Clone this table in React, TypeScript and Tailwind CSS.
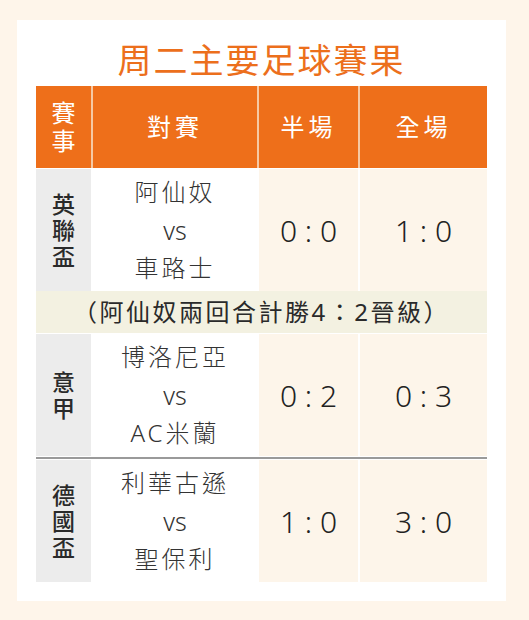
const rows = [
  { league: ['英', '聯', '盃'], home: '阿仙奴', away: '車路士', half: '0 : 0', full: '1 : 0' },
  { league: ['意', '甲'], home: '博洛尼亞', away: 'AC米蘭', half: '0 : 2', full: '0 : 3' },
  { league: ['德', '國', '盃'], home: '利華古遜', away: '聖保利', half: '1 : 0', full: '3 : 0' },
];

const cols = 'grid grid-cols-[55px_164px_99px_127px] gap-x-[2px]';

export default function App() {
  return (
    <div className="w-[529px] h-[620px] bg-[#fef5ea] pt-[20px] pl-[17px] pr-[23px] font-['Noto_Sans','Noto_Sans_CJK_TC',sans-serif]">
      <div className="h-[581px] bg-white pt-[19px] px-[19px]">
        <h1 className="h-[42px] mb-[5px] text-center text-[34px] leading-[42px] tracking-[2px] text-[#ec6f1c] font-normal">
          周二主要足球賽果
        </h1>
        <div className="bg-white">
          {/* header */}
          <div className={`${cols} h-[82px] bg-[#f6c9a4] text-white text-[24px]`}>
            <div className="bg-[#ee6f1a] flex flex-col items-center justify-center leading-[28px]">
              <span>賽</span>
              <span>事</span>
            </div>
            <div className="bg-[#ee6f1a] flex items-center justify-center tracking-[4px]">對賽</div>
            <div className="bg-[#ee6f1a] flex items-center justify-center tracking-[4px]">半場</div>
            <div className="bg-[#ee6f1a] flex items-center justify-center tracking-[4px]">全場</div>
          </div>

          {rows.map((r, i) => (
            <div key={i}>
              <div className={`${cols} mt-px h-[122px] text-[#333]`}>
                <div className="bg-[#ececec] flex flex-col items-center justify-center text-[23px] leading-[26px] font-medium text-[#2a2a2a]">
                  {r.league.map((c) => (
                    <span key={c}>{c}</span>
                  ))}
                </div>
                <div className="bg-white flex flex-col items-center justify-center text-[24px] leading-[38px] tracking-[3px] font-light">
                  <span>{r.home}</span>
                  <span className="tracking-normal text-[25px]">vs</span>
                  <span>{r.away}</span>
                </div>
                <div className="bg-[#fdf5ea] flex items-center justify-center text-[30px] font-light text-[#222] whitespace-pre">
                  {r.half}
                </div>
                <div className="bg-[#fdf5ea] flex items-center justify-center text-[30px] font-light text-[#222] whitespace-pre">
                  {r.full}
                </div>
              </div>
              {i === 0 && (
                <div className="h-[42px] bg-[#f3f1e1] flex items-center justify-center text-[24px] tracking-[2.5px] text-[#2a2a2a]">
                  （阿仙奴兩回合計勝4：2晉級）
                </div>
              )}
              {i === 1 && <div className="h-[2px] bg-[#9a9a9a] mt-px" />}
            </div>
          ))}
        </div>
      </div>
    </div>
  );
}
